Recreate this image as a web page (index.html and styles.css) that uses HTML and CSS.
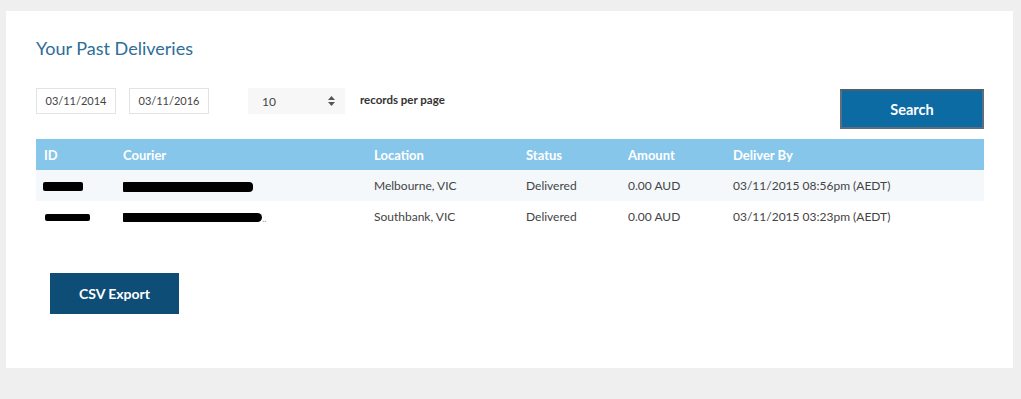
FILE: index.html
```html
<!DOCTYPE html>
<html>
<head>
<meta charset="utf-8">
<link rel="stylesheet" href="styles.css">
</head>
<body>
<div class="card">
  <h1 class="title">Your Past Deliveries</h1>
  <div class="filters">
    <div class="date">03/11/2014</div>
    <div class="date">03/11/2016</div>
    <div class="select"><span>10</span><svg class="arrows" width="7" height="10" viewBox="0 0 7 10"><path d="M3.5 0 L7 4 H0 Z M0 6 H7 L3.5 10 Z" fill="#555"/></svg></div>
    <div class="rpp">records per page</div>
    <button class="search">Search</button>
  </div>
  <table class="grid">
    <thead>
      <tr><th class="c-id">ID</th><th class="c-courier">Courier</th><th class="c-loc">Location</th><th class="c-status">Status</th><th class="c-amt">Amount</th><th>Deliver By</th></tr>
    </thead>
    <tbody>
      <tr class="odd"><td><span class="redact r1"></span></td><td><span class="redact r2"></span></td><td>Melbourne, VIC</td><td>Delivered</td><td>0.00 AUD</td><td>03/11/2015 08:56pm (AEDT)</td></tr>
      <tr><td><span class="redact r3"></span></td><td><span class="redact r4"></span><span class="dots">..</span></td><td>Southbank, VIC</td><td>Delivered</td><td>0.00 AUD</td><td>03/11/2015 03:23pm (AEDT)</td></tr>
    </tbody>
  </table>
  <button class="csv">CSV Export</button>
</div>
</body>
</html>
```
FILE: styles.css
```css
html, body { margin: 0; padding: 0; }
body {
  background: #efefef;
  font-family: Lato, "Open Sans", sans-serif;
  color: #444;
  width: 1021px;
  height: 399px;
  overflow: hidden;
}
.card {
  background: #fff;
  margin: 11px 0 0 6px;
  width: 1007px;
  height: 357px;
  box-sizing: border-box;
  padding: 27px 29px 0 30px;
}
.title {
  margin: 0;
  font-size: 18px;
  font-weight: 400;
  color: #2d6d98;
  line-height: 20px;
}
.filters {
  display: flex;
  align-items: flex-start;
  margin-top: 30px;
  height: 51px;
}
.date {
  width: 80px;
  height: 26px;
  box-sizing: border-box;
  border: 1px solid #e3e3e3;
  font-size: 11px;
  line-height: 24px;
  text-align: center;
  color: #444;
  margin-right: 13px;
}
.select {
  margin-left: 26px;
  width: 97px;
  height: 26px;
  background: #f7f7f7;
  display: flex;
  align-items: center;
  justify-content: space-between;
  box-sizing: border-box;
  padding: 0 10px 0 14px;
  font-size: 12px;
  color: #444;
}
.rpp {
  margin-left: 15px;
  font-size: 11.5px;
  font-weight: 700;
  color: #333;
  line-height: 24px;
}
.search {
  margin-left: auto;
  margin-top: 1px;
  width: 144px;
  height: 40px;
  background: #0d6ba4;
  border: 2px solid #5d6e7c;
  border-top-color: #4d5e6c;
  color: #fff;
  font-family: Lato, sans-serif;
  font-size: 14.5px;
  font-weight: 700;
  padding: 0;
  box-sizing: border-box;
}
.grid {
  width: 948px;
  border-collapse: collapse;
  font-size: 12px;
}
.grid th {
  background: #87c6eb;
  color: #fff;
  font-weight: 700;
  text-align: left;
  height: 31px;
  padding: 0 0 0 8px;
  font-size: 13px;
}
.grid td {
  height: 31px;
  padding: 0 0 0 8px;
  color: #444;
}
.grid tr.odd td { background: #f4f8fb; }
.c-id { width: 71px; }
.c-courier { width: 243px; }
.c-loc { width: 144px; }
.c-status { width: 94px; }
.c-amt { width: 97px; }
.redact {
  display: inline-block;
  background: #000;
  vertical-align: middle;
  border-radius: 2px;
}
.r1 { width: 40px; height: 9px; margin-left: -1px; }
.r2 { width: 130px; height: 10px; border-radius: 1px 4px 4px 1px; }
.r3 { width: 45px; height: 7px; margin-left: 1px; }
.r4 { width: 139px; height: 9px; border-radius: 1px 6px 6px 1px; }
.dots { color: #999; font-size: 10px; vertical-align: bottom; }
.csv {
  display: block;
  margin: 41px 0 0 14px;
  width: 129px;
  height: 41px;
  background: #0d4d76;
  border: none;
  color: #fff;
  font-family: Lato, sans-serif;
  font-size: 14px;
  font-weight: 700;
  padding: 0;
}
```
